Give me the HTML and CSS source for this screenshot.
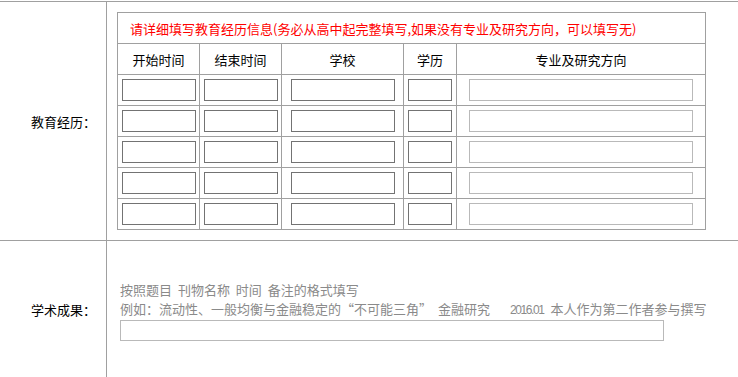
FILE: index.html
```html
<!DOCTYPE html>
<html lang="zh-CN">
<head>
<meta charset="utf-8">
<title>教育经历</title>
<link rel="stylesheet" href="styles.css">
</head>
<body>
<div class="form">
  <div class="row">
    <div class="label">教育经历：</div>
    <div class="field field-edu">
      <div class="edu-grid">
        <div class="notice">请详细填写教育经历信息(务必从高中起完整填写,如果没有专业及研究方向，可以填写无)</div>
        <div class="th">开始时间</div>
        <div class="th">结束时间</div>
        <div class="th">学校</div>
        <div class="th">学历</div>
        <div class="th">专业及研究方向</div>

        <div class="td"><input class="in in-date" type="text"></div>
        <div class="td"><input class="in in-date" type="text"></div>
        <div class="td"><input class="in in-school" type="text"></div>
        <div class="td"><input class="in in-degree" type="text"></div>
        <div class="td"><input class="in in-major" type="text"></div>

        <div class="td"><input class="in in-date" type="text"></div>
        <div class="td"><input class="in in-date" type="text"></div>
        <div class="td"><input class="in in-school" type="text"></div>
        <div class="td"><input class="in in-degree" type="text"></div>
        <div class="td"><input class="in in-major" type="text"></div>

        <div class="td"><input class="in in-date" type="text"></div>
        <div class="td"><input class="in in-date" type="text"></div>
        <div class="td"><input class="in in-school" type="text"></div>
        <div class="td"><input class="in in-degree" type="text"></div>
        <div class="td"><input class="in in-major" type="text"></div>

        <div class="td"><input class="in in-date" type="text"></div>
        <div class="td"><input class="in in-date" type="text"></div>
        <div class="td"><input class="in in-school" type="text"></div>
        <div class="td"><input class="in in-degree" type="text"></div>
        <div class="td"><input class="in in-major" type="text"></div>

        <div class="td"><input class="in in-date" type="text"></div>
        <div class="td"><input class="in in-date" type="text"></div>
        <div class="td"><input class="in in-school" type="text"></div>
        <div class="td"><input class="in in-degree" type="text"></div>
        <div class="td"><input class="in in-major" type="text"></div>
      </div>
    </div>
  </div>
  <div class="row row-last">
    <div class="label">学术成果：</div>
    <div class="field field-paper">
      <div class="hint">按照题目 刊物名称 时间 备注的格式填写</div>
      <div class="hint">例如：流动性、一般均衡与金融稳定的“不可能三角” 金融研究<span class="date">2016.01</span>本人作为第二作者参与撰写</div>
      <input class="in in-paper" type="text">
    </div>
  </div>
</div>
</body>
</html>
```
FILE: styles.css
```css
html, body {
  margin: 0;
  padding: 0;
  background: #fff;
}

body {
  font-family: "Noto Sans CJK SC", "Liberation Sans", sans-serif;
  font-size: 13px;
  color: #000;
}

.form {
  margin-top: 1px;
  border-top: 1px solid #a0a0a0;
}

.row {
  display: grid;
  grid-template-columns: 107px 1fr;
  border-bottom: 1px solid #a0a0a0;
}

.row-last {
  border-bottom: none;
  min-height: 136px;
}

.label {
  box-sizing: border-box;
  border-right: 1px solid #a0a0a0;
  display: flex;
  align-items: center;
  justify-content: flex-end;
  padding-right: 10px;
  white-space: nowrap;
}

.field-edu {
  padding: 10px 0 10px 10px;
}

.edu-grid {
  display: grid;
  grid-template-columns: 81px 81px 121px 52px 248px;
  grid-auto-rows: 30px;
  gap: 1px;
  width: max-content;
  background: #a0a0a0;
  border: 1px solid #a0a0a0;
}

.notice {
  grid-column: 1 / -1;
  background: #fff;
  color: #ff0000;
  display: flex;
  align-items: center;
  padding-left: 12px;
  white-space: nowrap;
}

.th,
.td {
  background: #fff;
  display: flex;
  align-items: center;
  justify-content: center;
}

.in {
  box-sizing: border-box;
  margin: 0;
  padding: 0;
  height: 22px;
  border: 1px solid #737373;
  background: #fff;
  font: inherit;
  outline: none;
}

.in-date { width: 74px; }
.in-school { width: 104px; }
.in-degree { width: 44px; }
.in-major {
  width: 224px;
  border-color: #b9b9b9;
}

.field-paper {
  padding: 39px 0 36px 13px;
}

.hint {
  line-height: 19px;
  color: #8a8a8a;
  word-spacing: 3px;
  white-space: nowrap;
}

.date {
  font-family: "Liberation Sans", sans-serif;
  font-size: 12px;
  letter-spacing: -1.4px;
  margin: 0 7px 0 20px;
}

.in-paper {
  display: block;
  width: 544px;
  height: 21px;
  border-color: #b9b9b9;
}
```
